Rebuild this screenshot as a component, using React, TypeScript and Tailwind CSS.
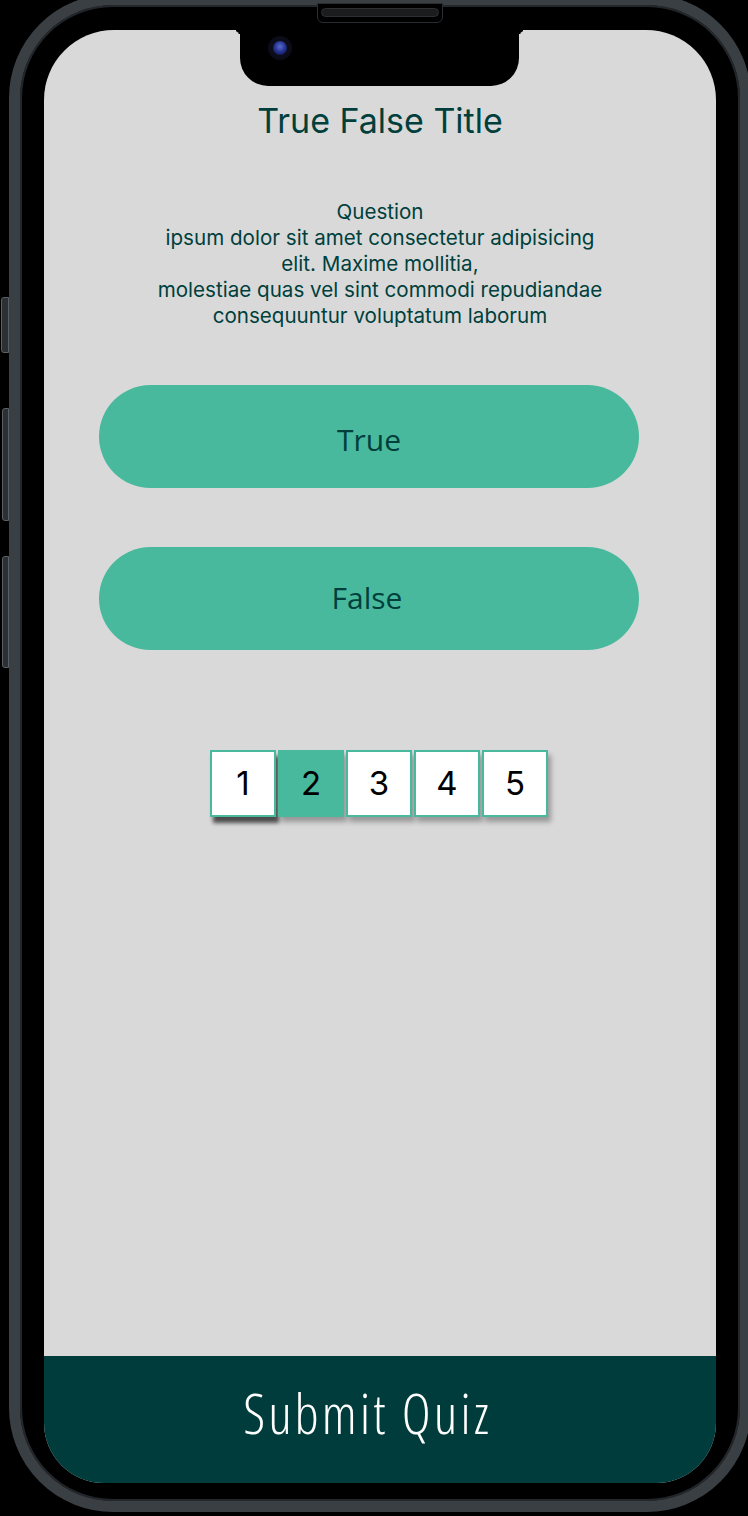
import * as React from 'react'

const PAGES = [1, 2, 3, 4, 5]

function SideButtons(): React.JSX.Element {
  return (
    <>
      <div className="absolute left-[1px] top-[297px] h-[56px] w-[8px] rounded-l-[3px] border border-[#5a6066] bg-[#2b3035]" />
      <div className="absolute left-[2px] top-[408px] h-[113px] w-[7px] rounded-l-[3px] border border-[#5a6066] bg-[#2b3035]" />
      <div className="absolute left-[2px] top-[556px] h-[112px] w-[7px] rounded-l-[3px] border border-[#5a6066] bg-[#2b3035]" />
    </>
  )
}

function Notch(): React.JSX.Element {
  return (
    <div className="absolute left-[196px] top-0 z-10 h-[56px] w-[279px] rounded-b-[28px] bg-black">
      <div className="absolute left-[-8px] top-0 h-[8px] w-[8px] rounded-tr-[8px] shadow-[4px_-4px_0_0_#000]" />
      <div className="absolute right-[-8px] top-0 h-[8px] w-[8px] rounded-tl-[8px] shadow-[-4px_-4px_0_0_#000]" />
      <div className="absolute left-[28px] top-[6px] flex h-[24px] w-[24px] items-center justify-center rounded-full bg-[#0c0c18]">
        <div className="h-[14px] w-[14px] rounded-full bg-[radial-gradient(circle_at_50%_40%,#5a6ad0,#1f2c86_55%,#0a0f30)]" />
      </div>
    </div>
  )
}

export default function App(): React.JSX.Element {
  const [answer, setAnswer] = React.useState<boolean | null>(null)
  const [page, setPage] = React.useState(2)

  return (
    <div className="relative h-[1516px] w-[748px] overflow-hidden bg-black">
      <SideButtons />
      <div className="relative ml-[9px] mt-[-6px] h-[1518px] w-[742px] rounded-[104px] border-[11px] border-[#3a3f44] bg-black px-[24px] pb-[18px] pt-[25px] shadow-[inset_0_0_0_2px_#23272b]">
        {/* speaker */}
        <div className="absolute left-[297px] top-[-2px] z-10 h-[20px] w-[126px] rounded-b-[6px] border border-[#2a2d30] bg-black px-[3px] pt-[4px]">
          <div className="h-[9px] w-full rounded-full border border-[#2c3034] bg-[#1a1c1e]" />
        </div>

        <div className="relative flex h-full flex-col overflow-hidden rounded-t-[70px] rounded-b-[60px] bg-[#d9d9d9]">
          <Notch />

          <main className="flex flex-1 flex-col items-center pt-[70px]">
            <h1
              className="text-[34px] leading-[41px] text-[#003f3c]"
              style={{ fontFamily: 'Inter, "Noto Sans", sans-serif' }}
            >
              True False Title
            </h1>

            <p
              className="mt-[58px] text-center text-[20.6px] leading-[26px] text-[#003f3c]"
              style={{ fontFamily: 'Inter, "Noto Sans", sans-serif' }}
            >
              Question
              <br />
              ipsum dolor sit amet consectetur adipisicing
              <br />
              elit. Maxime mollitia,
              <br />
              molestiae quas vel sint commodi repudiandae
              <br />
              consequuntur voluptatum laborum
            </p>

            <div className="mt-[56px] flex w-full flex-col gap-[59px] pl-[55px] pr-[77px]">
              {[true, false].map((value) => (
                <button
                  key={String(value)}
                  type="button"
                  onClick={() => setAnswer(value)}
                  className={`flex h-[103px] w-full items-center justify-center rounded-full bg-[#48b99c] text-[30px] text-[#003f3c] ${
                    value ? 'pt-[6px]' : 'pb-[2px] pr-[4px]'
                  } ${answer === value ? 'ring-2 ring-[#003f3c]' : ''}`}
                  style={{ fontFamily: '"Open Sans", "Noto Sans", sans-serif' }}
                >
                  {value ? 'True' : 'False'}
                </button>
              ))}
            </div>

            <div className="mr-[2px] mt-[100px] flex gap-[2px]">
              {PAGES.map((n) => (
                <button
                  key={n}
                  type="button"
                  onClick={() => setPage(n)}
                  className={`flex h-[67px] w-[66px] items-center justify-center border-2 border-[#48b99c] text-[33px] text-black ${
                    page === n ? 'bg-[#48b99c]' : 'bg-white'
                  } ${
                    n === 1
                      ? 'shadow-[3px_6px_4px_rgba(0,0,0,0.65)]'
                      : 'shadow-[3px_5px_5px_rgba(0,0,0,0.3)]'
                  }`}
                  style={{ fontFamily: 'Inter, Roboto, sans-serif' }}
                >
                  {n}
                </button>
              ))}
            </div>
          </main>

          <button
            type="button"
            className="flex h-[127px] w-full shrink-0 items-center justify-center bg-[#003c3c] pb-[12px] pr-[25px] text-[55px] font-light tracking-[3px] text-white"
            style={{ fontFamily: '"Open Sans", sans-serif', fontStretch: '75%' }}
          >
            Submit Quiz
          </button>
        </div>
      </div>
    </div>
  )
}
